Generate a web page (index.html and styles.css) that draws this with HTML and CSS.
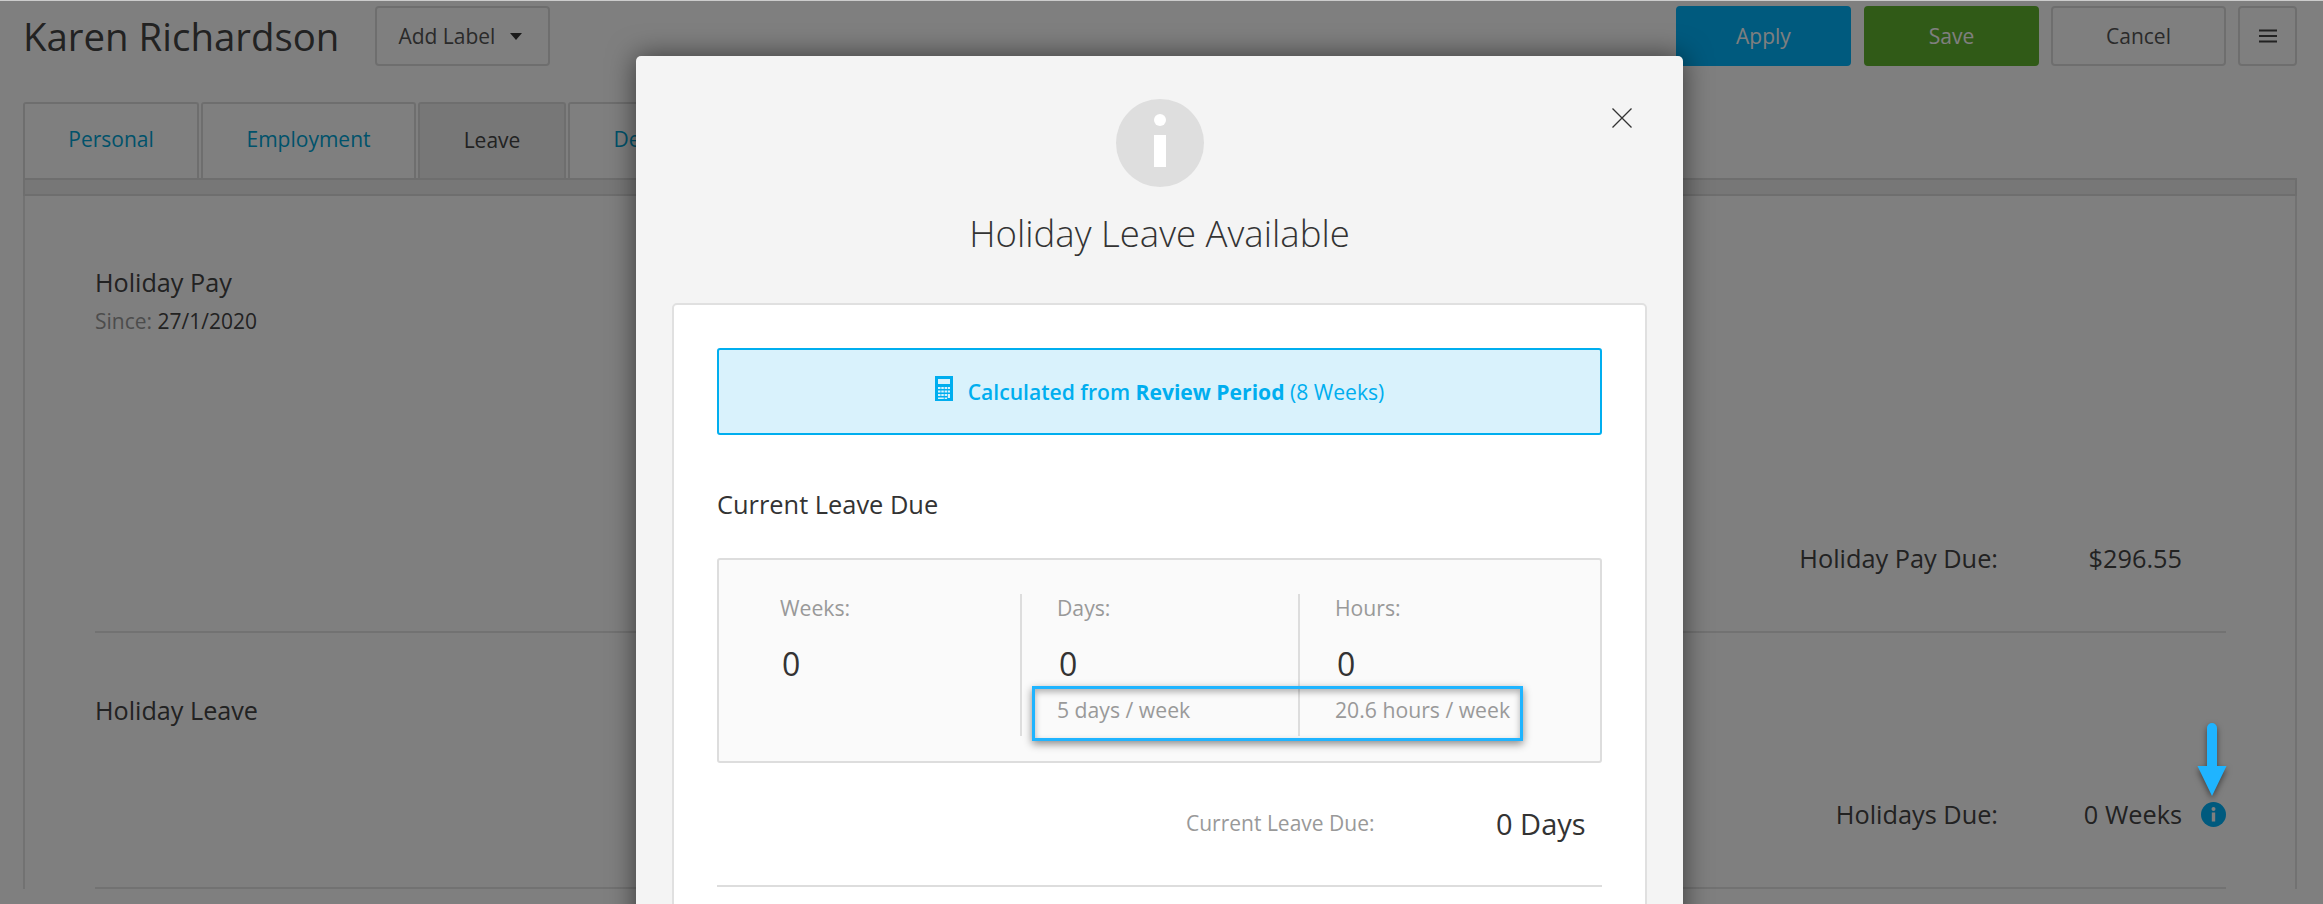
FILE: index.html
```html
<!DOCTYPE html>
<html lang="en">
<head>
<meta charset="utf-8">
<title>Karen Richardson</title>
<link rel="stylesheet" href="styles.css">
</head>
<body>
<div class="page">
  <header class="topbar">
    <h1 class="name">Karen Richardson</h1>
    <button class="btn btn-label">Add Label <span class="caret"></span></button>
    <div class="actions">
      <button class="btn btn-apply">Apply</button>
      <button class="btn btn-save">Save</button>
      <button class="btn btn-cancel">Cancel</button>
      <button class="btn btn-menu" aria-label="Menu">
        <svg width="18" height="14" viewBox="0 0 18 14"><path d="M0 1.5h18M0 7h18M0 12.500h18" stroke="#444" stroke-width="2"/></svg>
      </button>
    </div>
  </header>
  <nav class="tabs">
    <a class="tab tab-personal">Personal</a>
    <a class="tab tab-employment">Employment</a>
    <a class="tab tab-leave">Leave</a>
    <a class="tab tab-deductions">Deductions</a>
  </nav>
  <div class="strip"></div>
  <main class="panel">
    <section class="section section-pay">
      <div>
        <h2 class="sec-title">Holiday Pay</h2>
        <p class="since"><span class="since-label">Since:</span> 27/1/2020</p>
      </div>
      <div class="due">
        <span class="due-label">Holiday Pay Due:</span>
        <span class="due-value">$296.55</span>
        <span class="due-slot"></span>
      </div>
    </section>
    <section class="section section-leave">
      <h2 class="sec-title">Holiday Leave</h2>
      <div class="due">
        <span class="due-label">Holidays Due:</span>
        <span class="due-value">0 Weeks</span>
        <span class="due-slot">
          <svg class="info-small" width="25" height="25" viewBox="0 0 25 25"><circle cx="12.500" cy="12.500" r="12.500" fill="#00b4fc"/><circle cx="12.500" cy="7" r="2" fill="#fff"/><rect x="10.800" y="10.500" width="3.400" height="9" fill="#fff"/></svg>
        </span>
      </div>
    </section>
  </main>
</div>

<div class="overlay">
  <div class="modal">
    <button class="close" aria-label="Close">
      <svg width="20" height="20" viewBox="0 0 20 20"><path d="M0.500 0.500L19.500 19.500M19.500 0.500L0.500 19.500" stroke="#333" stroke-width="1.300" fill="none"/></svg>
    </button>
    <div class="modal-head">
      <svg class="info-big" width="88" height="88" viewBox="0 0 88 88"><circle cx="44" cy="44" r="44" fill="#dedede"/><ellipse cx="44" cy="21" rx="6" ry="6" fill="#fff"/><rect x="38" y="36" width="12" height="32" fill="#fff"/></svg>
      <h2 class="modal-title">Holiday Leave Available</h2>
    </div>
    <div class="card">
      <div class="notice">
        <svg class="calc" width="18" height="25" viewBox="0 0 18 25"><path fill-rule="evenodd" d="M0 0h18v25H0zM3 3v5h12V3zM3 11v2h2.500v-2zM6.300 11v2h2.500v-2zM9.600 11v2h2.500v-2zM12.800 11v2H15v-2zM3 14.500v2h2.500v-2zM6.300 14.500v2h2.500v-2zM9.600 14.500v2h2.500v-2zM12.800 14.500v2H15v-2zM3 18v2h2.500v-2zM6.300 18v2h2.500v-2zM9.600 18v2h2.500v-2zM12.800 18v4H15v-4zM3 21.500v1.500h5.800v-1.500zM9.600 21.500v1.500h2.500v-1.500z" fill="#00aeef"/></svg>
        <span class="notice-text">Calculated from <strong>Review Period</strong> <span class="notice-light">(8 Weeks)</span></span>
      </div>
      <h3 class="card-title">Current Leave Due</h3>
      <div class="stats">
        <div class="stat stat-weeks">
          <div class="stat-label">Weeks:</div>
          <div class="stat-num">0</div>
        </div>
        <div class="stat stat-days">
          <div class="stat-label">Days:</div>
          <div class="stat-num">0</div>
          <div class="stat-sub">5 days / week</div>
        </div>
        <div class="stat stat-hours">
          <div class="stat-label">Hours:</div>
          <div class="stat-num">0</div>
          <div class="stat-sub">20.6 hours / week</div>
        </div>
      </div>
      <div class="total">
        <span class="total-label">Current Leave Due:</span>
        <span class="total-value">0 Days</span>
      </div>
      <hr class="card-rule">
    </div>
  </div>
</div>

<div class="highlight"></div>
<svg class="arrow" width="40" height="82" viewBox="0 0 40 82"><path d="M15 5a5 5 0 0 1 10 0v38h9.500L20 73 5.500 43H15z" fill="#1fb4ff"/></svg>
</body>
</html>
```

FILE: styles.css
```css
* { box-sizing: border-box; }
html, body { margin: 0; padding: 0; height: 904px; overflow: hidden; }
body {
  position: relative;
  background: #fff;
  font-family: "Open Sans", "Liberation Sans", sans-serif;
  color: #444;
  border-top: 1px solid #ccc;
}
button { font-family: inherit; }
h1, h2, h3, p { margin: 0; font-weight: 400; }

.page { padding: 5px 26px 0 23px; }

.topbar { display: flex; align-items: center; height: 60px; }
.name { font-size: 38.4px; font-weight: 400; color: #444; line-height: 60px; white-space: nowrap; }
.btn {
  height: 60px;
  border-radius: 4px;
  font-size: 21px;
  background: #fff;
  border: 2px solid #ddd;
  color: #555;
  padding: 0;
}
.btn-label { width: 175px; margin-left: 36px; display: flex; align-items: center; padding-left: 21px; gap: 15px; }
.caret { width: 0; height: 0; border-left: 6px solid transparent; border-right: 6px solid transparent; border-top: 7px solid #333; }
.actions { margin-left: auto; display: flex; }
.btn-apply { width: 175px; background: #00b4fc; border-color: #00b4fc; color: #fff; margin-right: 13px; }
.btn-save { width: 175px; background: #60b42e; border-color: #60b42e; color: #fff; margin-right: 12px; }
.btn-cancel { width: 175px; margin-right: 12px; }
.btn-menu { width: 59px; display: flex; align-items: center; justify-content: center; }

.tabs { display: flex; gap: 2px; margin-top: 36px; }
.tab {
  height: 76px;
  border: 2px solid #ddd;
  border-bottom: 0;
  border-radius: 3px 3px 0 0;
  font-size: 21px;
  color: #00a5d6;
  display: flex; align-items: center; justify-content: center;
  padding-bottom: 4px;
}
.tab-personal { width: 176px; }
.tab-employment { width: 215px; }
.tab-leave { width: 148px; background: #eee; color: #444; padding-bottom: 2px; }
.tab-deductions { width: 202px; }

.strip { height: 18px; background: #eee; border: 2px solid #ddd; }

.panel { border: solid #e4e4e4; border-width: 0 2px; padding: 8px 69px 0 70px; }
.section { display: flex; flex-direction: column; justify-content: space-between; border-bottom: 2px solid #e4e4e4; }
.section-pay { height: 429px; padding: 62px 0 56px; }
.section-leave { height: 256px; padding: 61px 0 56px; }
.sec-title { font-size: 25.2px; line-height: 33px; color: #444; font-weight: 500; }
.since { font-size: 21px; line-height: 27px; margin-top: 9px; color: #444; }
.since-label { color: #999; }
.due { display: flex; align-items: center; justify-content: flex-end; font-size: 25.3px; line-height: 33px; color: #444; }
.due-value { width: 184px; text-align: right; }
.due-slot { width: 44px; height: 33px; display: flex; align-items: center; justify-content: flex-end; }

.overlay {
  position: absolute; inset: 0;
  background: rgba(0, 0, 0, 0.5);
  display: flex; justify-content: center;
  overflow: hidden;
  padding: 55px 4px 0 0;
}
.modal {
  position: relative;
  width: 1047px;
  height: 1000px;
  background: #f4f4f4;
  border-radius: 5px;
  box-shadow: 0 0 28px rgba(0, 0, 0, 0.55);
  padding: 43px 36px 0;
}
.close { position: absolute; top: 52px; right: 51px; background: none; border: 0; padding: 0; width: 20px; height: 20px; display: block; }
.close svg { display: block; }
.modal-head { display: flex; flex-direction: column; align-items: center; height: 204px; }
.info-big { display: block; }
.modal-title { font-size: 36.6px; line-height: 44px; font-weight: 300; color: #333; margin-top: 24px; white-space: nowrap; }

.card { background: #fff; border: 2px solid #e0e0e0; border-radius: 5px; padding: 43px 43px 0; height: 800px; }
.notice {
  height: 87px;
  background: #d9f2fc;
  border: 2px solid #00aeef;
  border-radius: 3px;
  display: flex; align-items: center; justify-content: center; gap: 15px;
  color: #00aeef; font-size: 21.1px; font-weight: 600;
}
.calc { display: block; margin-top: -6px; }
.notice-text strong { font-weight: 700; }
.notice-light { font-weight: 500; }
.card-title { font-size: 25.4px; line-height: 33px; color: #333; font-weight: 500; margin-top: 53px; }
.stats {
  margin-top: 37px;
  height: 205px;
  background: #fafafa;
  border: 2px solid #ddd;
  border-radius: 3px;
  padding-top: 34px;
  display: grid;
  grid-template-columns: 301px 278px 1fr;
}
.stat { height: 142px; padding-left: 61px; }
.stat-days { border-left: 2px solid #ddd; padding-left: 35px; }
.stat-hours { border-left: 2px solid #ddd; padding-left: 35px; }
.stat-label { font-size: 21.2px; line-height: 27px; color: #999; height: 27px; }
.stat-num { font-size: 32px; line-height: 44px; color: #333; margin-top: 21px; margin-left: 2px; }
.stat-sub { font-size: 21.2px; line-height: 27px; color: #999; margin-top: 10px; }
.total { display: flex; align-items: center; margin-top: 40px; height: 40px; padding-left: 469px; }
.total-label { font-size: 21px; color: #999; width: 310px; }
.total-value { font-size: 29px; color: #333; }
.card-rule { margin: 42px 0 0; border: 0; border-top: 2px solid #ddd; }

.highlight {
  position: absolute;
  left: 1032px; top: 685px;
  width: 491px; height: 55px;
  border: 3px solid #1fb4ff;
  box-shadow: 0 3px 8px rgba(0, 0, 0, 0.45), inset 0 3px 6px rgba(0, 0, 0, 0.3);
}
.arrow {
  position: absolute;
  left: 2192px; top: 722px;
  filter: drop-shadow(0 3px 3px rgba(0, 0, 0, 0.5));
}
```
